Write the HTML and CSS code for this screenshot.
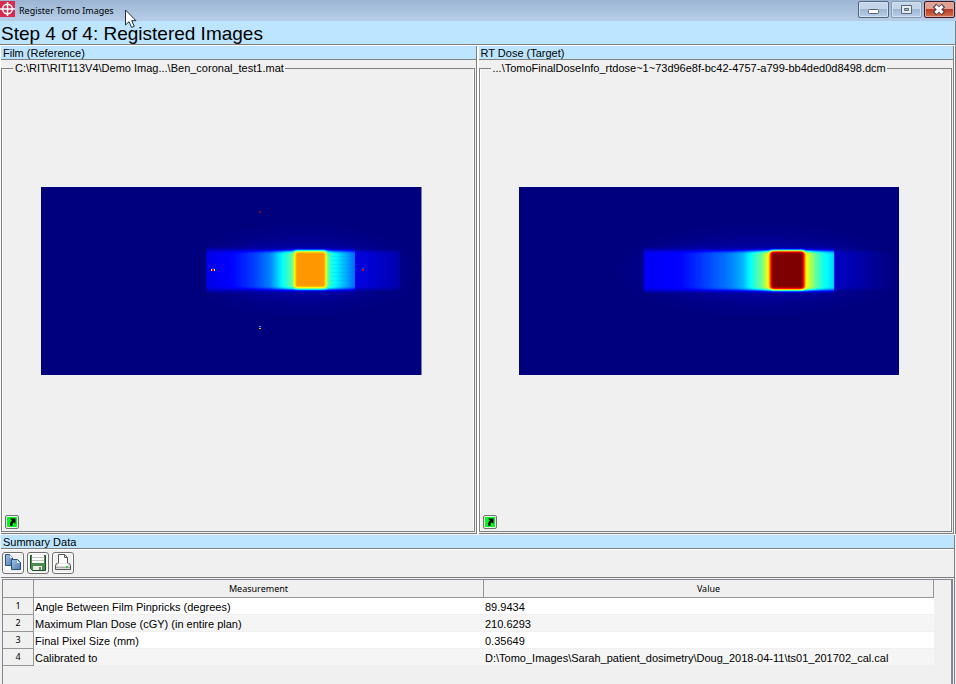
FILE: index.html
```
<!DOCTYPE html>
<html lang="en">
<head>
<meta charset="utf-8">
<title>Register Tomo Images</title>
<link rel="stylesheet" href="styles.css">
</head>
<body>
<svg class="defs" aria-hidden="true">
  <defs>
    <filter id="jet" filterUnits="userSpaceOnUse" x="0" y="0" width="380" height="188" color-interpolation-filters="sRGB">
      <feComponentTransfer>
        <feFuncR type="table" tableValues="0 0 0 0 .5 1 1 1 .5"/>
        <feFuncG type="table" tableValues="0 0 .5 1 1 1 .5 0 0"/>
        <feFuncB type="table" tableValues=".5 1 1 1 .5 0 0 0 0"/>
      </feComponentTransfer>
    </filter>
    <filter id="edge" filterUnits="userSpaceOnUse" x="0" y="0" width="380" height="188" color-interpolation-filters="sRGB"><feGaussianBlur stdDeviation="0.5 1.5"/></filter>
    <filter id="soft" filterUnits="userSpaceOnUse" x="0" y="0" width="380" height="188" color-interpolation-filters="sRGB"><feGaussianBlur stdDeviation="1.8"/></filter>
    <filter id="haze" filterUnits="userSpaceOnUse" x="0" y="0" width="380" height="188" color-interpolation-filters="sRGB"><feGaussianBlur stdDeviation="22 12"/></filter>
    <linearGradient id="filmBand" gradientUnits="userSpaceOnUse" x1="165" x2="358" y1="0" y2="0">
      <stop offset="0" stop-color="#1a1a1a"/>
      <stop offset=".14" stop-color="#212121"/>
      <stop offset=".24" stop-color="#2e2e2e"/>
      <stop offset=".33" stop-color="#404040"/>
      <stop offset=".395" stop-color="#606060"/>
      <stop offset=".44" stop-color="#777777"/>
      <stop offset=".62" stop-color="#777777"/>
      <stop offset=".665" stop-color="#606060"/>
      <stop offset=".73" stop-color="#484848"/>
      <stop offset=".77" stop-color="#3a3a3a"/>
      <stop offset=".771" stop-color="#191919"/>
      <stop offset="1" stop-color="#0c0c0c"/>
    </linearGradient>
    <linearGradient id="doseBand" gradientUnits="userSpaceOnUse" x1="124" x2="315" y1="0" y2="0">
      <stop offset="0" stop-color="#1d1d1d"/>
      <stop offset=".2" stop-color="#212121"/>
      <stop offset=".31" stop-color="#2e2e2e"/>
      <stop offset=".46" stop-color="#404040"/>
      <stop offset=".52" stop-color="#4d4d4d"/>
      <stop offset=".56" stop-color="#606060"/>
      <stop offset=".62" stop-color="#7c7c7c"/>
      <stop offset=".65" stop-color="#999999"/>
      <stop offset=".86" stop-color="#999999"/>
      <stop offset=".9" stop-color="#7a7a7a"/>
      <stop offset=".94" stop-color="#656565"/>
      <stop offset="1" stop-color="#545454"/>
    </linearGradient>
    <linearGradient id="tail" gradientUnits="userSpaceOnUse" x1="315" x2="375" y1="0" y2="0">
      <stop offset="0" stop-color="#121212"/>
      <stop offset="1" stop-color="#000000"/>
    </linearGradient>
    <linearGradient id="page" x1="0" y1="0" x2="1" y2="1">
      <stop offset="0" stop-color="#a4c4e4"/>
      <stop offset="1" stop-color="#4a7cb2"/>
    </linearGradient>
  </defs>
</svg>

<div class="window">
  <header class="titlebar">
    <svg class="logo" viewBox="0 0 15 17" aria-hidden="true"><path fill="#d62b50" d="M0 1h15v16H0z"/><g fill="none" stroke="#fff" stroke-width="1.5"><circle cx="7.500" cy="9" r="4.800"/><path d="M7.500 2v14M0 9h15"/></g></svg>
    <h1 class="title">Register Tomo Images</h1>
    <div class="window-buttons">
      <button class="win" aria-label="Minimize"><svg viewBox="1 1 29 15"><rect x="10.500" y="8.500" width="10" height="4" rx="1" fill="#fff" stroke="#56616f"/></svg></button>
      <button class="win faded" aria-label="Maximize"><svg viewBox="1 1 29 15"><path d="M10.500 4.500h10v8h-10z" fill="#e4ebf3" stroke="#59677b"/><path d="M13.500 7.500h4v2h-4z" fill="#a9c0da" stroke="#59677b"/></svg></button>
      <button class="win close" aria-label="Close"><svg viewBox="1 1 29 15"><path d="M10.500 4.500l9 8M19.500 4.500l-9 8" stroke="#4d4048" stroke-width="5"/><path d="M11.500 5.200l7 6.600M18.500 5.200l-7 6.600" stroke="#fff" stroke-width="3"/></svg></button>
    </div>
    <svg class="cursor" viewBox="0 0 13 20" aria-hidden="true"><path d="M1.500 1v15l3.500-3.300 2.600 5.800 2.700-1.200-2.600-5.600H12z" fill="#fff" stroke="#222c40"/></svg>
  </header>

  <h2 class="step">Step 4 of 4: Registered Images</h2>

  <main class="panels">
    <section class="panel">
      <h3 class="bar">Film (Reference)</h3>
      <fieldset class="frame">
        <legend>C:\RIT\RIT113V4\Demo Imag...\Ben_coronal_test1.mat</legend>
        <svg class="map" viewBox="0 0 380 188" role="img" aria-label="Film dose map">
          <g filter="url(#jet)">
            <path d="M0 0h380v188H0z"/>
            <ellipse cx="260" cy="83" rx="85" ry="26" fill="#0e0e0e" filter="url(#haze)"/>
            <path d="M0 0h165v188H0z"/>
            <path d="M165 61h149v44H165z" fill="#0d0d0d" filter="url(#soft)"/>
            <path d="M0 50h165v70H0z"/>
            <path d="M165 64h193v38H165z" fill="url(#filmBand)" filter="url(#edge)"/>
            <rect x="253" y="64" width="32" height="37" rx="2" fill="#b9b9b9" filter="url(#soft)"/>
          </g>
          <g stroke="#0078ff" stroke-opacity=".15"><path d="M289 69.500h24M289 73.500h24M289 77.500h24M289 81.500h24M289 85.500h24M289 89.500h24M289 93.500h24M289 97.500h24"/></g>
          <g shape-rendering="crispEdges"><path fill="#900000" d="M218 24h2v2h-2z"/><path fill="#0060d0" d="M171 81h2v1h-2zM321 81h2v1h-2z"/><path fill="#ffef70" d="M170 82h1v2h-1zM173 82h1v2h-1z"/><path fill="#d00000" d="M171 82h2v2h-2zM321 82h2v2h-2z"/><path fill="#20b8f0" d="M218 139h2v1h-2z"/><path fill="#ffb000" d="M218 141h2v1h-2z"/></g>
        </svg>
        <button class="expand" aria-label="Expand film image"><svg viewBox="1 1 12 12"><path d="M2 2h10v10H2z" fill="#00f81c"/><path d="M5 3.500h5.500v5.300L8.700 7.200Q7 8.500 7.500 11H5.500Q4 8 7 5.500z"/></svg></button>
      </fieldset>
    </section>
    <section class="panel">
      <h3 class="bar">RT Dose (Target)</h3>
      <fieldset class="frame">
        <legend>...\TomoFinalDoseInfo_rtdose~1~73d96e8f-bc42-4757-a799-bb4ded0d8498.dcm</legend>
        <svg class="map" viewBox="0 0 380 188" role="img" aria-label="RT dose map">
          <g filter="url(#jet)">
            <path d="M0 0h380v188H0z"/>
            <ellipse cx="240" cy="83" rx="110" ry="26" fill="#0e0e0e" filter="url(#haze)"/>
            <path d="M315 64h60v38h-60z" fill="url(#tail)" filter="url(#edge)"/>
            <path d="M124 61h191v44H124z" fill="#0d0d0d" filter="url(#soft)"/>
            <path d="M125 64h190v39H125z" fill="url(#doseBand)" filter="url(#edge)"/>
            <rect x="251" y="64" width="34" height="38" rx="2" fill="#fff" filter="url(#soft)"/>
          </g>
        </svg>
        <button class="expand" aria-label="Expand dose image"><svg viewBox="1 1 12 12"><path d="M2 2h10v10H2z" fill="#00f81c"/><path d="M5 3.500h5.500v5.300L8.700 7.200Q7 8.500 7.500 11H5.500Q4 8 7 5.500z"/></svg></button>
      </fieldset>
    </section>
  </main>

  <section class="summary">
    <h3 class="bar">Summary Data</h3>
    <div class="tools">
      <button class="tool" aria-label="Copy"><svg viewBox="1 1 20 20"><path d="M3 14h7v4H3z" fill="#fff"/><g stroke="#2c5077" fill="url(#page)"><path d="M3.500 2.500h4l3 3v8h-7z"/><path d="M9.500 7.500h6l3 3v7h-9z"/></g><path d="M8 3v3h3zM15 8v3h3z" fill="#e6f2ff"/></svg></button>
      <button class="tool" aria-label="Save"><svg viewBox="1 1 20 20"><path d="M3.500 3.500h15v15h-13l-2-2z" fill="#4c8c4c" stroke="#174e25"/><path d="M5 3h12v8H5z" fill="#fff"/><path d="M5 5.500h12M5 8.500h12" stroke="#bbc7bb"/><path d="M6 14h9v4H6z" fill="#e9eee9"/><path d="M12 15h2v3h-2z" fill="#778277"/></svg></button>
      <button class="tool" aria-label="Print"><svg viewBox="1 1 20 20"><path d="M6.500 11.500v-9h6l3 3v6" fill="#fff" stroke="#555"/><path d="M12.500 2.500v3h3" fill="none" stroke="#555"/><path d="M5.500 11.500h-1l-1 2v4h15v-4l-1-2h-1" fill="#deded4" stroke="#555"/><path d="M6 12h10v2H6z" fill="#fff"/><path d="M4 15.500h14" stroke="#aaa"/><path d="M14 14h2v2h-2z" fill="#31d637"/></svg></button>
    </div>
    <div class="sheet">
      <table>
        <colgroup><col class="num"><col class="wide"><col class="wide"></colgroup>
        <thead><tr><th></th><th scope="col">Measurement</th><th scope="col">Value</th></tr></thead>
        <tbody>
          <tr><th scope="row">1</th><td>Angle Between Film Pinpricks (degrees)</td><td>89.9434</td></tr>
          <tr><th scope="row">2</th><td>Maximum Plan Dose (cGY) (in entire plan)</td><td>210.6293</td></tr>
          <tr><th scope="row">3</th><td>Final Pixel Size (mm)</td><td>0.35649</td></tr>
          <tr><th scope="row">4</th><td>Calibrated to</td><td>D:\Tomo_Images\Sarah_patient_dosimetry\Doug_2018-04-11\ts01_201702_cal.cal</td></tr>
        </tbody>
      </table>
    </div>
  </section>
</div>
</body>
</html>
```
FILE: styles.css
```
* { box-sizing: border-box; }
body {
  margin: 0;
  background: #f0f0f0;
  color: #000;
  font: 11px/13px "Liberation Sans", Arial, sans-serif;
}
h1, h2, h3 { margin: 0; font-weight: 400; }
button { padding: 0; font: inherit; }
button svg { display: block; width: 100%; height: 100%; }
.defs { position: absolute; width: 0; height: 0; }
.window { display: flex; flex-direction: column; min-height: 100vh; }

.titlebar {
  position: relative;
  display: flex;
  align-items: flex-start;
  height: 21px;
  background: linear-gradient(#9bb5d3, #b8cee8);
}
.logo { width: 15px; height: 17px; }
.title {
  flex: 1;
  padding-left: 4px;
  font: 9px/21px "Noto Sans", sans-serif;
}
.window-buttons { display: flex; gap: 2px; padding: 1px 1px 0 0; }
.win {
  width: 31px;
  height: 17px;
  border: 1px solid #53657d;
  border-radius: 2px;
  background: linear-gradient(#c4d5e9 45%, #9cb6d3 50%, #b9d0e8);
  box-shadow: inset 0 0 0 1px #d4e1f0;
}
.faded { border-color: #8499b3; }
.close {
  border-color: #431422;
  background: linear-gradient(#dfa193 45%, #b93b24 50%, #d4724f);
  box-shadow: inset 0 0 0 1px #e2a89c;
}
.cursor { position: absolute; left: 124px; top: 9px; width: 13px; height: 20px; }

.step {
  height: 24px;
  padding-left: 1px;
  border-right: 1px solid #808080;
  border-bottom: 1px solid #808080;
  background: #bde5ff;
  font-size: 19px;
  line-height: 26px;
}
.bar {
  height: 14px;
  padding-left: 2px;
  border-bottom: 1px solid #808080;
  background: #bde5ff;
  font-size: 11px;
  line-height: 14px;
}

.panels {
  display: grid;
  grid-template-columns: 1fr 1fr;
  column-gap: 2px;
  padding: 1px 1px 0 1px;
  border-right: 1px solid #808080;
  background: #fff;
}
.panel {
  min-width: 0;
  border-right: 1px solid #808080;
  border-bottom: 1px solid #808080;
  background: #f0f0f0;
}
.frame {
  position: relative;
  display: flex;
  flex-direction: column;
  min-width: 0;
  margin: 2px 1px 1px 0;
  padding: 112px 52px 8px 39px;
  border: 1px solid #808080;
  box-shadow: inset 1px 0 #fff, inset -1px 0 #fff;
}
.frame legend {
  margin-left: -28px;
  padding: 0 1px 0 2px;
  background: #f0f0f0;
  white-space: nowrap;
}
.map { display: block; width: 100%; }
.expand {
  width: 14px;
  height: 14px;
  margin: 140px 0 -6px -36px;
  border: 1px solid #707070;
  border-radius: 2px;
  background: #f0f0f0;
}

.summary {
  flex: 1;
  display: flex;
  flex-direction: column;
  margin: 1px 1px 0;
  border-right: 1px solid #808080;
}
.tools {
  display: flex;
  gap: 3px;
  height: 29px;
  padding: 2px 0 0 1px;
  border-top: 1px solid #fff;
  border-bottom: 1px solid #808080;
}
.tool {
  width: 22px;
  height: 22px;
  border: 1px solid #707070;
  border-radius: 3px;
  background: #f0f0f0;
  box-shadow: inset 0 0 0 1px #fff;
}
.sheet {
  flex: 1;
  margin: 1px 1px 0;
  padding-right: 17px;
  border: solid #828790;
  border-width: 1px 2px 0 1px;
}
table { width: 100%; border-collapse: separate; border-spacing: 0; table-layout: fixed; }
.num { width: 31px; }
th, td { height: 17px; padding: 0; white-space: nowrap; }
th {
  border-right: 1px solid #969696;
  border-bottom: 1px solid #969696;
  font: 9px/16px "Noto Sans", sans-serif;
}
thead th { height: 18px; }
td {
  padding: 2px 0 0 1px;
  border-bottom: 1px solid #f0f0f0;
  background: #fff;
  line-height: 14px;
  text-align: left;
}
tr:nth-child(even) td { background: #f5f5f5; }
```
